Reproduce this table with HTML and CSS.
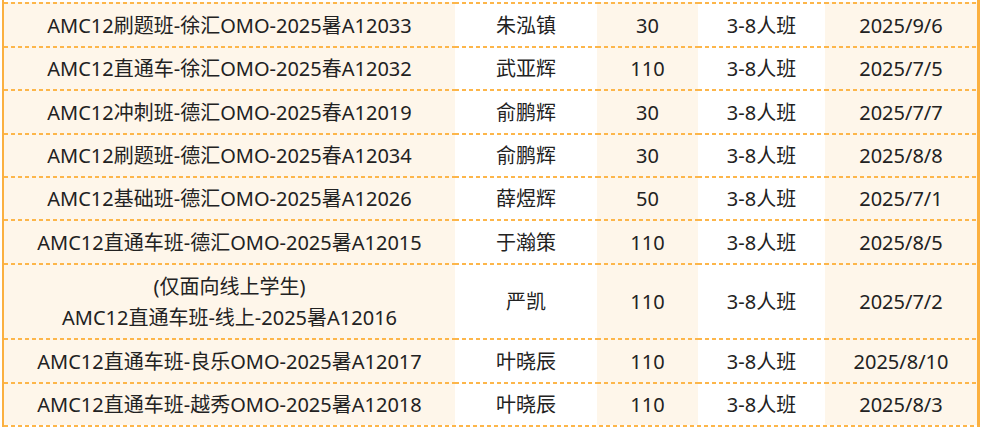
FILE: index.html
```html
<!DOCTYPE html>
<html lang="zh-CN">
<head>
<meta charset="utf-8">
<title>AMC12 课程表</title>
<link rel="stylesheet" href="styles.css">
</head>
<body>
<div class="frame">
<table class="schedule">
  <colgroup>
    <col class="c-course"><col class="c-teacher"><col class="c-price"><col class="c-size"><col class="c-date">
  </colgroup>
  <tbody>
    <tr class="r44"><td>AMC12刷题班-徐汇OMO-2025暑A12033</td><td>朱泓镇</td><td>30</td><td>3-8人班</td><td>2025/9/6</td></tr>
    <tr class="r43"><td>AMC12直通车-徐汇OMO-2025春A12032</td><td>武亚辉</td><td>110</td><td>3-8人班</td><td>2025/7/5</td></tr>
    <tr class="r44"><td>AMC12冲刺班-德汇OMO-2025春A12019</td><td>俞鹏辉</td><td>30</td><td>3-8人班</td><td>2025/7/7</td></tr>
    <tr class="r43"><td>AMC12刷题班-德汇OMO-2025春A12034</td><td>俞鹏辉</td><td>30</td><td>3-8人班</td><td>2025/8/8</td></tr>
    <tr class="r43"><td>AMC12基础班-德汇OMO-2025暑A12026</td><td>薛煜辉</td><td>50</td><td>3-8人班</td><td>2025/7/1</td></tr>
    <tr class="r44"><td>AMC12直通车班-德汇OMO-2025暑A12015</td><td>于瀚策</td><td>110</td><td>3-8人班</td><td>2025/8/5</td></tr>
    <tr class="r75"><td class="two-line">(仅面向线上学生)<br>AMC12直通车班-线上-2025暑A12016</td><td>严凯</td><td>110</td><td>3-8人班</td><td>2025/7/2</td></tr>
    <tr class="r44"><td>AMC12直通车班-良乐OMO-2025暑A12017</td><td>叶晓辰</td><td>110</td><td>3-8人班</td><td>2025/8/10</td></tr>
    <tr class="r43"><td>AMC12直通车班-越秀OMO-2025暑A12018</td><td>叶晓辰</td><td>110</td><td>3-8人班</td><td>2025/8/3</td></tr>
  </tbody>
</table>
</div>
</body>
</html>
```
FILE: styles.css
```css
html, body {
  margin: 0;
  padding: 0;
  background: #ffffff;
}

.frame {
  box-sizing: content-box;
  width: 973px;
  padding-top: 2px;
  margin-left: 2px;
  border-left: 2px solid #fbb040;
  border-right: 3px solid #fbb040;
}

.schedule {
  border-collapse: collapse;
  table-layout: fixed;
  width: 973px;
  font-family: "Noto Sans", "Noto Sans CJK SC", sans-serif;
  font-size: 20px;
  color: #222222;
}

.c-course { width: 451px; background: #fef6ea; }
.c-teacher { width: 142px; background: #ffffff; }
.c-price { width: 101px; background: #fef6ea; }
.c-size { width: 127px; background: #ffffff; }
.c-date { width: 152px; background: #fef6ea; }

.schedule td {
  padding: 2px 0 0;
  text-align: center;
  vertical-align: middle;
  white-space: nowrap;
  line-height: 31px;
  background-image: repeating-linear-gradient(90deg, #fdb64a 0 4px, transparent 4px 7px);
  background-size: 100% 2px;
  background-repeat: no-repeat;
  background-position: 0 0;
}

.r44 td { height: 42px; }
.r43 td { height: 41px; }
.r75 td { height: 73px; }

.frame::after {
  content: "";
  display: block;
  height: 2px;
  background-image: repeating-linear-gradient(90deg, #fdb64a 0 4px, transparent 4px 7px);
}
```
